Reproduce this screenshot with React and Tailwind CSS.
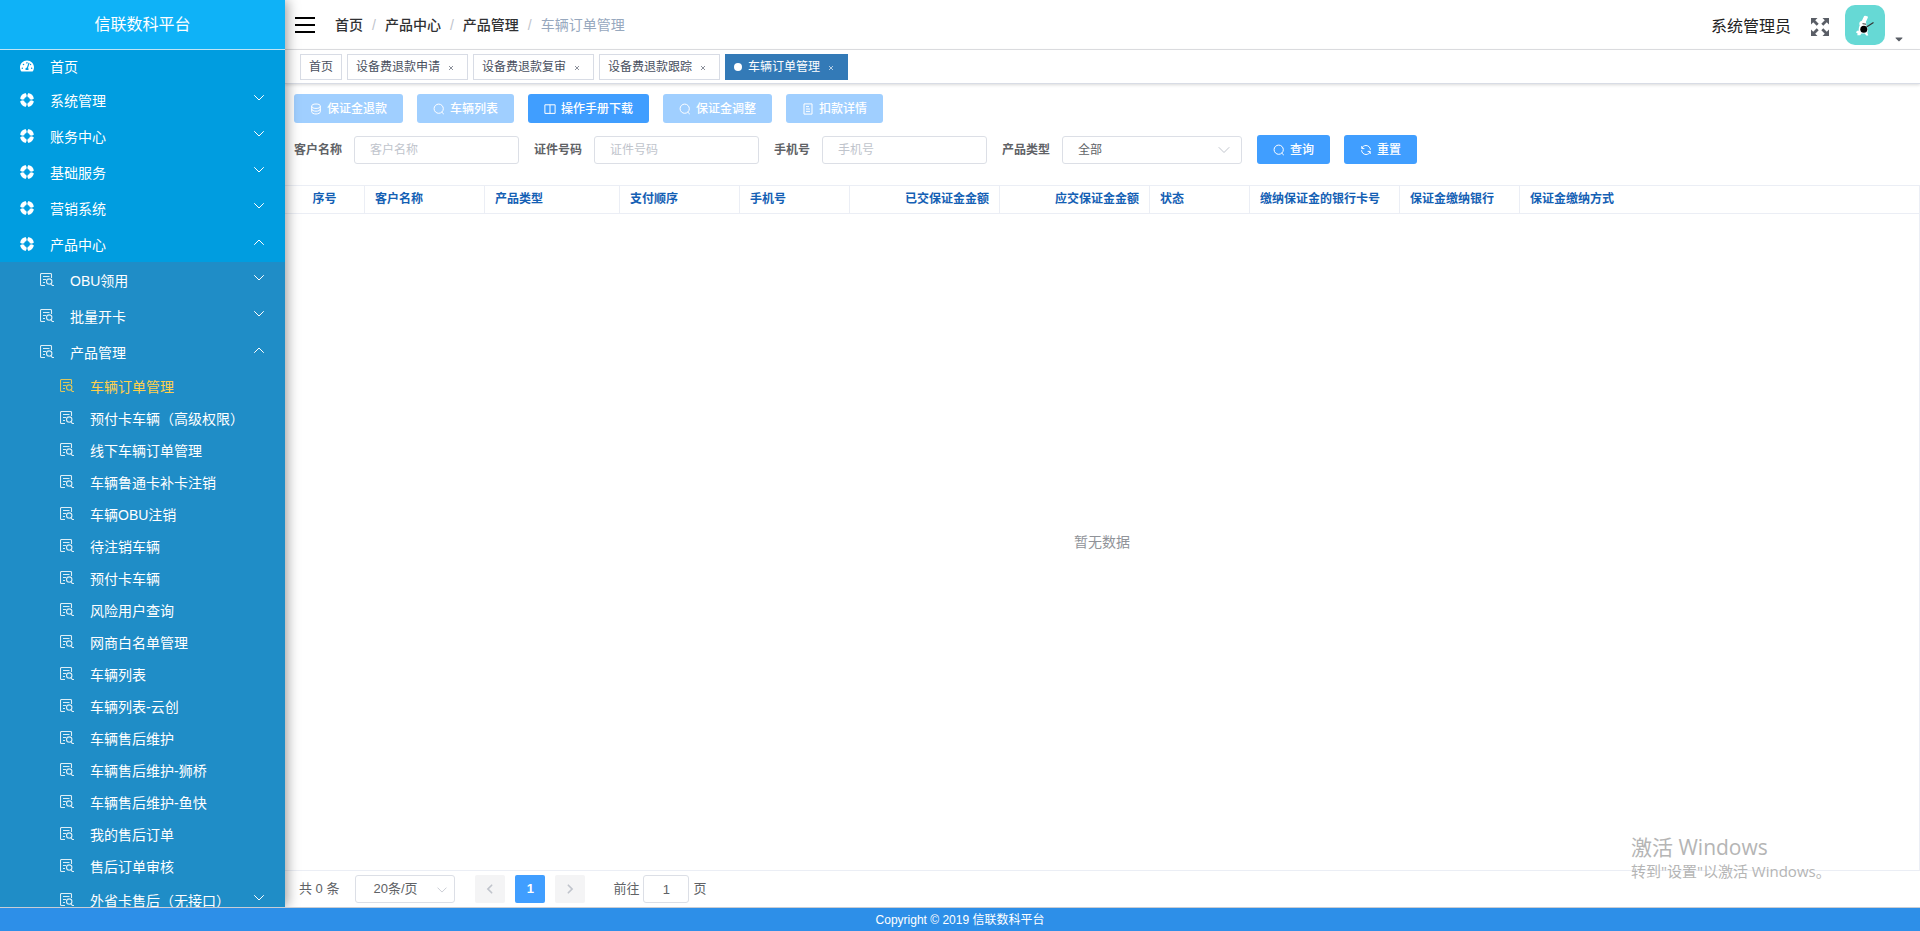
import React from "react";
import { FaTachometerAlt, FaCaretDown } from "react-icons/fa";

function RingIcon() {
  return (
    <svg viewBox="0 0 14 14" className="size-3.5 shrink-0" aria-hidden="true">
      <circle cx="7" cy="7" r="4.9" fill="none" stroke="currentColor" strokeWidth="1.8" opacity="0.5" />
      <circle
        cx="7"
        cy="7"
        r="5"
        fill="none"
        stroke="currentColor"
        strokeWidth="4"
        pathLength="40"
        strokeDasharray="7.6 2.4"
        strokeDashoffset="-1.2"
      />
    </svg>
  );
}

function OrderIcon() {
  return (
    <svg viewBox="0 0 14 14" className="size-3.5 shrink-0 opacity-85" fill="none" stroke="currentColor" strokeWidth="1.1" aria-hidden="true">
      <path d="M5 12.5H1.500a1 1 0 0 1-1-1v-10a1 1 0 0 1 1-1h9a1 1 0 0 1 1 1V5" />
      <path d="M3 3.500h6.500M3 6.500h3M3 9.500h2" />
      <circle cx="9.200" cy="8.600" r="2.700" />
      <path d="M11 10.600l1.300 1.900h1.700" />
    </svg>
  );
}

function Chevron({ className, d = "M1 3.5l5 5 5-5" }) {
  return (
    <svg viewBox="0 0 12 12" className={className} fill="none" stroke="currentColor" strokeLinecap="round" aria-hidden="true">
      <path d={d} />
    </svg>
  );
}

const drawings = {
  coin: (
    <>
      <ellipse cx="6" cy="3.2" rx="4.3" ry="2.2" />
      <path d="M1.7 3.2v5.6c0 1.2 1.9 2.2 4.3 2.2s4.3-1 4.3-2.2V3.2M1.7 6c0 1.2 1.9 2.2 4.3 2.2s4.3-1 4.3-2.2" />
    </>
  ),
  search: (
    <>
      <circle cx="5.7" cy="5.7" r="4.6" />
      <path d="M8.8 9.2l2 1.9" />
    </>
  ),
  book: <path d="M6 1.8v8.6M.9 1.8h10.2v8.6H.9z" />,
  document: <path d="M2 .9h8v10.2H2zM4 3.6h3M4 6h4M4 8.4h4" />,
  refresh: (
    <>
      <path d="M2 4.3C2.600 2.500 4.200 1.500 6 1.500c2.500 0 4.400 2 4.400 4.300M1.800 2v2.600h2.600" />
      <path d="M10 7.700C9.400 9.500 7.800 10.500 6 10.500c-2.500 0-4.400-2-4.400-4.300M10.200 10V7.400H7.600" />
    </>
  ),
};

function ActionButton({ icon, children, disabled }) {
  return (
    <button
      type="button"
      disabled={disabled}
      className="flex h-[29px] items-center gap-[5px] rounded-[3px] bg-[#409eff] px-4 text-xs font-medium text-white disabled:bg-[#a0cfff]"
    >
      <svg viewBox="0 0 12 12" className="size-3 shrink-0" fill="none" stroke="currentColor" aria-hidden="true">
        {drawings[icon]}
      </svg>
      {children}
    </button>
  );
}

const topMenu = ["系统管理", "账务中心", "基础服务", "营销系统", "产品中心"];
const subMenu = ["OBU领用", "批量开卡", "产品管理"];
const pages = [
  "车辆订单管理",
  "预付卡车辆（高级权限）",
  "线下车辆订单管理",
  "车辆鲁通卡补卡注销",
  "车辆OBU注销",
  "待注销车辆",
  "预付卡车辆",
  "风险用户查询",
  "网商白名单管理",
  "车辆列表",
  "车辆列表-云创",
  "车辆售后维护",
  "车辆售后维护-狮桥",
  "车辆售后维护-鱼快",
  "我的售后订单",
  "售后订单审核",
];

function MenuGroup({ icon, label, open, indent }) {
  return (
    <button type="button" aria-expanded={open} className={`flex h-9 w-full shrink-0 items-center gap-4 pr-5 text-left ${indent}`}>
      {icon}
      <span className="flex-1 pt-0.5">{label}</span>
      <Chevron className="mb-1 size-3 shrink-0" d={open ? "M1.500 8.500L6 4l4.500 4.500" : "M1.500 3.500L6 8l4.500-4.500"} />
    </button>
  );
}

function Sidebar() {
  return (
    <aside className="relative z-10 flex w-[285px] shrink-0 flex-col bg-[#009de0] text-sm text-white shadow-[2px_0_12px_rgba(0,0,0,0.4)]">
      <h1 className="flex h-[50px] shrink-0 items-center justify-center border-b border-[#bfe4f5] bg-[#0fb2f7] text-base">
        信联数科平台
      </h1>
      <nav className="flex min-h-0 flex-1 flex-col overflow-hidden">
        <a href="#home" className="flex h-8 shrink-0 items-center gap-4 pl-5">
          <FaTachometerAlt className="size-3.5" />
          <span className="pt-0.5">首页</span>
        </a>
        {topMenu.map((label) => (
          <MenuGroup key={label} icon={<RingIcon />} label={label} open={label === "产品中心"} indent="pl-5" />
        ))}
        <div className="flex min-h-0 flex-1 flex-col bg-[#1f8dc7]">
          {subMenu.map((label) => (
            <MenuGroup key={label} icon={<OrderIcon />} label={label} open={label === "产品管理"} indent="pl-10" />
          ))}
          {pages.map((label, i) => (
            <a
              key={label}
              href={`#page-${i}`}
              className={`flex h-8 shrink-0 items-center gap-4 pl-[60px] ${i === 0 ? "text-[#ffd04b]" : ""}`}
            >
              <OrderIcon />
              <span className="pt-0.5">{label}</span>
            </a>
          ))}
          <MenuGroup icon={<OrderIcon />} label="外省卡售后（无接口）" open={false} indent="pl-[60px]" />
        </div>
      </nav>
    </aside>
  );
}

function Header() {
  return (
    <header className="flex h-[50px] shrink-0 items-center border-b border-[#e0e1e4] pr-[15px] pl-2.5">
      <button type="button" aria-label="菜单" className="mr-5">
        <svg viewBox="0 0 20 16" className="h-4 w-5" stroke="#000" strokeWidth="2" aria-hidden="true">
          <path d="M0 1h20M0 8h20M0 15h20" />
        </svg>
      </button>
      <nav className="flex flex-1 items-center gap-[9px] text-sm font-medium text-[#303133]">
        <a href="#home">首页</a>
        <span className="text-[#c0c4cc]">/</span>
        <a href="#center">产品中心</a>
        <span className="text-[#c0c4cc]">/</span>
        <a href="#manage">产品管理</a>
        <span className="text-[#c0c4cc]">/</span>
        <span className="font-normal text-[#97a8be]">车辆订单管理</span>
      </nav>
      <span className="pt-1 text-base text-[#222]">系统管理员</span>
      <button type="button" aria-label="全屏" className="mt-1 mr-4 ml-5">
        <svg viewBox="0 0 18 18" className="size-[18px]" fill="#5a5e66" stroke="#5a5e66" strokeWidth="2.8" aria-hidden="true">
          <path stroke="none" d="M0 0h6.500L0 6.500zM18 0v6.500L11.500 0zM0 18v-6.500L6.500 18zM18 18h-6.500l6.500-6.500z" />
          <path d="M2 2l4.700 4.700M16 2l-4.700 4.700M2 16l4.700-4.700M16 16l-4.700-4.700" />
        </svg>
      </button>
      <button type="button" aria-label="用户" className="flex h-10 items-end gap-2">
        <svg viewBox="0 0 40 40" className="size-10 rounded-[10px] bg-[#66d9d5]" aria-hidden="true">
          <path d="M17.300 17.500L20 11.800M19.600 17l2.200-4.800" stroke="#fff" strokeWidth="2.200" strokeLinecap="round" />
          <ellipse cx="17.800" cy="18.800" rx="3.500" ry="3" fill="#fff" />
          <path
            fill="#fff"
            d="M15 20l6.500.5c1.500 2.500 1.600 5 .9 7.500l.9 2.600h-2.100l-1.400-2.200-3.400.2-1.200 1.600-2.900.1.300-1.700-1.600-1 1-1.900 1.700.1c-.1-2.200.2-4.200 1.300-5.800z"
          />
          <path d="M17.500 18.700l3.500.5" stroke="#333" strokeWidth="1" />
          <circle cx="18.800" cy="24.300" r="3.500" fill="#000" />
          <path d="M21.500 22l7-4.600" stroke="#333" strokeWidth="1.200" />
        </svg>
        <FaCaretDown className="size-3 text-[#5a5e66]" />
      </button>
    </header>
  );
}

const tabs = ["设备费退款申请", "设备费退款复审", "设备费退款跟踪"];

function CloseButton({ label }) {
  return (
    <button type="button" aria-label={`关闭${label}`} className="ml-[3px] flex w-4 justify-center pt-0.5">
      <svg viewBox="0 0 6 6" className="size-1.5 opacity-70" stroke="currentColor" strokeWidth="0.9" aria-hidden="true">
        <path d="M1 1l4 4M5 1l-4 4" />
      </svg>
    </button>
  );
}

function TabBar() {
  return (
    <div className="flex h-[34px] shrink-0 items-center gap-[5px] border-b border-[#d8dce5] pl-[15px] text-xs text-[#495060] shadow-[0_1px_3px_rgba(0,0,0,0.15)]">
      <a href="#home" className="flex h-[26px] items-center border border-[#d8dce5] px-2">
        首页
      </a>
      {tabs.map((tab) => (
        <div key={tab} className="flex h-[26px] items-center border border-[#d8dce5] px-2">
          <a href="#tab">{tab}</a>
          <CloseButton label={tab} />
        </div>
      ))}
      <div className="flex h-[26px] items-center border border-[#337ab7] bg-[#337ab7] px-2 text-white">
        <span className="mr-1.5 size-2 rounded-full bg-white" />
        <a href="#tab">车辆订单管理</a>
        <CloseButton label="车辆订单管理" />
      </div>
    </div>
  );
}

const fields = [
  { id: "customer", label: "客户名称" },
  { id: "idno", label: "证件号码" },
  { id: "phone", label: "手机号" },
];

function Filters() {
  return (
    <form className="flex flex-wrap items-center gap-[15px] pt-3 pl-[9px] text-xs text-[#606266]">
      {fields.map(({ id, label }) => (
        <div key={id} className="flex items-center gap-3">
          <label htmlFor={id} className="font-bold">
            {label}
          </label>
          <input
            id={id}
            placeholder={label}
            className="h-7 w-[165px] rounded-[3px] border border-[#dcdfe6] px-[15px] placeholder:text-[#c0c4cc]"
          />
        </div>
      ))}
      <div className="flex items-center gap-3">
        <label htmlFor="type" className="font-bold">
          产品类型
        </label>
        <div className="relative">
          <select id="type" className="h-7 w-[180px] appearance-none rounded-[3px] border border-[#dcdfe6] px-[15px]">
            <option>全部</option>
          </select>
          <Chevron className="pointer-events-none absolute top-2 right-3 size-3 text-[#c0c4cc]" />
        </div>
      </div>
      <div className="flex gap-[14px]">
        <ActionButton icon="search">查询</ActionButton>
        <ActionButton icon="refresh">重置</ActionButton>
      </div>
    </form>
  );
}

const columns = [
  { label: "序号", cls: "w-20 text-center" },
  { label: "客户名称", cls: "w-[120px] text-left" },
  { label: "产品类型", cls: "w-[135px] text-left" },
  { label: "支付顺序", cls: "w-[120px] text-left" },
  { label: "手机号", cls: "w-[110px] text-left" },
  { label: "已交保证金金额", cls: "w-[150px] text-right" },
  { label: "应交保证金金额", cls: "w-[150px] text-right" },
  { label: "状态", cls: "w-[100px] text-left" },
  { label: "缴纳保证金的银行卡号", cls: "w-[150px] text-left" },
  { label: "保证金缴纳银行", cls: "w-[120px] text-left" },
  { label: "保证金缴纳方式", cls: "text-left" },
];

function OrderTable() {
  return (
    <div className="mt-[21px] grid min-h-0 flex-1">
      <table className="h-full w-full table-fixed border-separate border-spacing-0 border-y border-r border-[#ebeef5]">
        <thead>
          <tr className="h-7">
            {columns.map(({ label, cls }) => (
              <th
                key={label}
                className={`h-7 border-r border-b border-[#ebeef5] px-2.5 pb-0.5 text-xs font-bold whitespace-nowrap text-[#1460b4] last:border-r-0 ${cls}`}
              >
                {label}
              </th>
            ))}
          </tr>
        </thead>
        <tbody>
          <tr>
            <td colSpan={11} className="text-center text-sm text-[#909399]">
              暂无数据
            </td>
          </tr>
        </tbody>
      </table>
    </div>
  );
}

function Pagination() {
  return (
    <div className="flex h-9 shrink-0 items-center pl-3.5 text-[13px] text-[#606266]">
      <span className="mr-4">共 0 条</span>
      <div className="relative mr-5">
        <select
          aria-label="每页条数"
          className="h-7 w-[100px] appearance-none rounded-[3px] border border-[#dcdfe6] pr-5 text-center"
        >
          <option>20条/页</option>
        </select>
        <Chevron className="pointer-events-none absolute top-2.5 right-2 size-2.5 text-[#c0c4cc]" />
      </div>
      <div className="flex gap-2.5">
        <button type="button" disabled aria-label="上一页" className="flex h-7 w-[30px] items-center justify-center rounded-[2px] bg-[#f4f4f5] text-[#c0c4cc]">
          <Chevron className="size-2.5 stroke-2" d="M8 1.500L3.500 6 8 10.500" />
        </button>
        <button type="button" className="h-7 w-[30px] rounded-[2px] bg-[#409eff] font-bold text-white">
          1
        </button>
        <button type="button" disabled aria-label="下一页" className="flex h-7 w-[30px] items-center justify-center rounded-[2px] bg-[#f4f4f5] text-[#c0c4cc]">
          <Chevron className="size-2.5 stroke-2" d="M4 1.500L8.500 6 4 10.500" />
        </button>
      </div>
      <label className="ml-7 flex items-center gap-1">
        前往
        <input defaultValue="1" className="h-7 w-[46px] rounded-[3px] border border-[#dcdfe6] text-center" />
        页
      </label>
    </div>
  );
}

export default function App() {
  return (
    <div className="relative flex h-screen flex-col bg-white font-['Liberation_Sans','Noto_Sans_CJK_SC',sans-serif]">
      <div className="flex min-h-0 flex-1 overflow-hidden">
        <Sidebar />
        <main className="flex min-w-0 flex-1 flex-col">
          <Header />
          <TabBar />
          <div className="flex flex-wrap gap-[14px] pt-2.5 pl-[9px]">
            <ActionButton icon="coin" disabled>保证金退款</ActionButton>
            <ActionButton icon="search" disabled>车辆列表</ActionButton>
            <ActionButton icon="book">操作手册下载</ActionButton>
            <ActionButton icon="search" disabled>保证金调整</ActionButton>
            <ActionButton icon="document" disabled>扣款详情</ActionButton>
          </div>
          <Filters />
          <OrderTable />
          <Pagination />
        </main>
      </div>
      <footer className="flex h-6 shrink-0 items-center justify-center border-t border-[#c9cdd4] bg-[#2d8fe8] text-xs text-white">
        Copyright © 2019 信联数科平台
      </footer>
      <div className="pointer-events-none absolute right-[95px] bottom-[50px] w-[194px] font-['Open_Sans','Noto_Sans_CJK_SC',sans-serif] whitespace-nowrap text-[#b5b5b5]">
        <p className="text-[21px] leading-7">激活 Windows</p>
        <p className="text-[15px] leading-5">转到"设置"以激活 Windows。</p>
      </div>
    </div>
  );
}
